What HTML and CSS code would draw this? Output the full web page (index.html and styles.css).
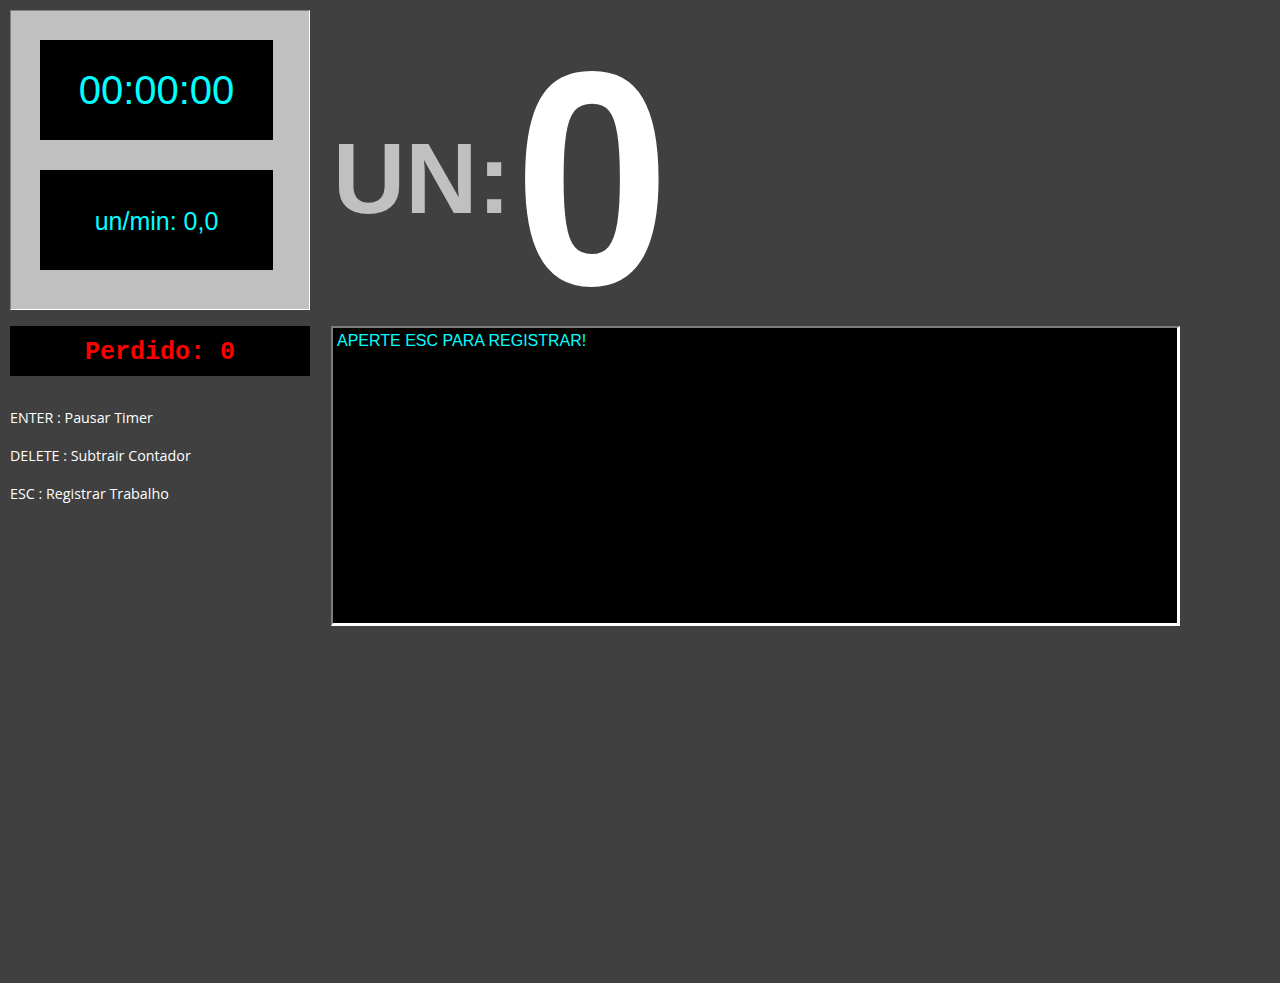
FILE: index.html
```html
<!DOCTYPE html>
<html lang="pt">
<head>
<meta charset="utf-8">
<title>Contador</title>
<link rel="stylesheet" href="styles.css">
</head>
<body>
<div class="layout">
  <div class="left-col">
    <div class="panel">
      <div class="display timer">00:00:00</div>
      <div class="display rate">un/min: 0,0</div>
    </div>
    <div class="lost">Perdido: 0</div>
    <div class="help">
      <p>ENTER : Pausar Timer</p>
      <p>DELETE : Subtrair Contador</p>
      <p>ESC : Registrar Trabalho</p>
    </div>
  </div>
  <div class="right-col">
    <div class="counter">
      <span class="counter-label">UN:</span>
      <span class="counter-value">0</span>
    </div>
    <textarea class="log" readonly>APERTE ESC PARA REGISTRAR!</textarea>
  </div>
</div>
</body>
</html>
```
FILE: styles.css
```css
html, body {
  margin: 0;
  padding: 0;
  background: #404040;
}
body {
  padding: 10px;
  font-family: "Liberation Sans", Arial, sans-serif;
}
.layout {
  display: flex;
  gap: 20px;
  align-items: flex-start;
}
.left-col {
  width: 300px;
  display: flex;
  flex-direction: column;
}
.panel {
  box-sizing: border-box;
  width: 300px;
  height: 300px;
  background: #c0c0c0;
  border: 1px solid;
  border-color: #808080 #ffffff #ffffff #808080;
  padding: 29px 36px 0 29px;
  display: flex;
  flex-direction: column;
  gap: 30px;
}
.display {
  box-sizing: border-box;
  width: 233px;
  height: 100px;
  background: #000;
  color: #00ffff;
  display: flex;
  align-items: center;
  justify-content: center;
}
.timer {
  font-size: 40px;
}
.rate {
  font-size: 25px;
  padding-top: 2px;
}
.lost {
  margin-top: 16px;
  height: 50px;
  background: #000;
  color: #ff0000;
  font-family: "Liberation Mono", "Courier New", monospace;
  font-weight: bold;
  font-size: 25px;
  padding-top: 2px;
  box-sizing: border-box;
  display: flex;
  align-items: center;
  justify-content: center;
}
.help {
  margin-top: 23px;
  color: #ffffff;
  font-family: "Open Sans", "Noto Sans", sans-serif;
  font-size: 14.3px;
}
.help p {
  margin: 0;
  line-height: 38px;
}
.right-col {
  display: flex;
  flex-direction: column;
  gap: 16px;
}
.counter {
  box-sizing: border-box;
  height: 300px;
  padding-top: 36px;
  padding-left: 3px;
  display: flex;
  align-items: center;
  font-family: "Liberation Sans", Arial, sans-serif;
  font-weight: bold;
}
.counter-label {
  font-size: 100px;
  line-height: 1;
  color: #c0c0c0;
}
.counter-value {
  margin-left: 3px;
  font-size: 305px;
  line-height: 1;
  color: #ffffff;
  transform: scaleX(0.92);
  transform-origin: left center;
}
.log {
  box-sizing: border-box;
  display: block;
  margin: 0 0 0 1px;
  width: 849px;
  height: 300px;
  resize: none;
  background: #000;
  color: #00ffff;
  font-family: "Liberation Sans", Arial, sans-serif;
  font-size: 16px;
  padding: 4px 4px 2px;
  border-style: solid;
  border-width: 2px 3px 3px 2px;
  border-color: #7d7d7d #ffffff #ffffff #7d7d7d;
  outline: none;
  overflow: hidden;
}
```
